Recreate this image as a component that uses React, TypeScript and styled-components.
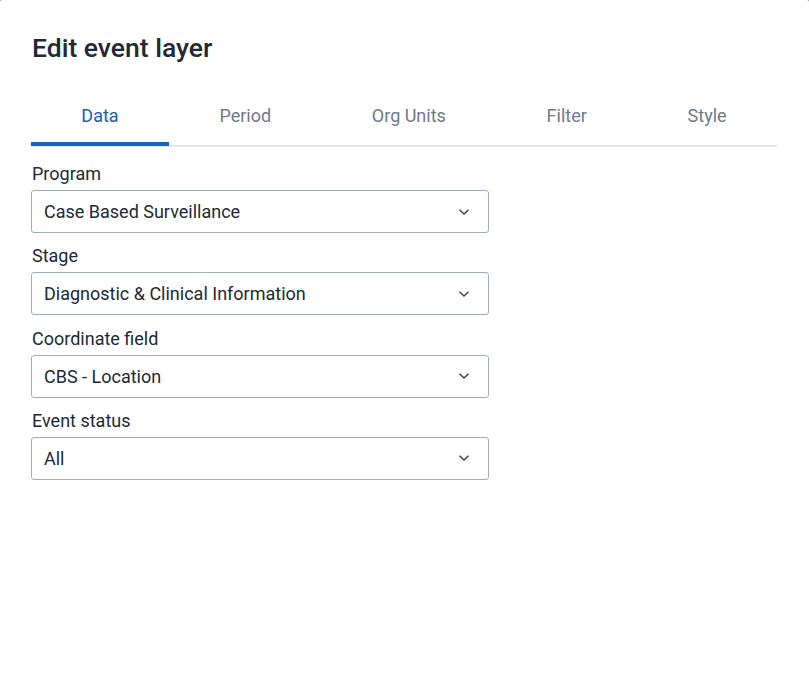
import React from "react";
import styled, { createGlobalStyle } from "styled-components";

const Global = createGlobalStyle`
  html, body { margin: 0; padding: 0; background: #8a8f96; }
  body { font-family: Roboto, "Liberation Sans", sans-serif; }
  * { box-sizing: border-box; }
`;

const Dialog = styled.div`
  width: 809px;
  height: 678px;
  background: #ffffff;
  border-radius: 2px 2px 0 0;
  padding: 28px 32px 0 32px;
  overflow: hidden;
`;

const Title = styled.h2`
  margin: 0;
  font-size: 26.5px;
  font-weight: 500;
  color: #212934;
  line-height: 40px;
`;

const TabBar = styled.div`
  display: flex;
  margin-top: 28px;
  margin-left: -1px;
  border-bottom: 2px solid #e2e6ec;
`;

const Tab = styled.div<{ $active?: boolean }>`
  flex: 1 1 auto;
  text-align: center;
  font-size: 18px;
  line-height: 22px;
  padding: 9px 8px 15px;
  color: ${(p) => (p.$active ? "#1b5cb3" : "#6e7a8a")};
  margin-bottom: -1px;
  border-bottom: 4px solid ${(p) => (p.$active ? "#1565c0" : "transparent")};
`;

const Form = styled.div`
  display: flex;
  flex-direction: column;
  gap: 11.33px;
  margin-top: 15px;
  width: 458px;
  margin-left: -1px;
`;

const Field = styled.div`
  display: flex;
  flex-direction: column;
  gap: 4px;
`;

const Label = styled.div`
  font-size: 18px;
  line-height: 24px;
  color: #212934;
  padding-left: 1px;
`;

const Select = styled.div`
  height: 43px;
  border: 1px solid #a0adba;
  border-radius: 3px;
  display: flex;
  align-items: center;
  justify-content: space-between;
  padding: 0 18px 0 12px;
  font-size: 18px;
  color: #212934;
`;

const Chevron = () => (
  <svg width="12" height="8" viewBox="0 0 12 8" fill="none">
    <path d="M1.5 1.8 L6 6 L10.5 1.8" stroke="#3a4450" strokeWidth="1.5" />
  </svg>
);

const fields = [
  ["Program", "Case Based Surveillance"],
  ["Stage", "Diagnostic & Clinical Information"],
  ["Coordinate field", "CBS - Location"],
  ["Event status", "All"],
];

const tabs = ["Data", "Period", "Org Units", "Filter", "Style"];

export default function App() {
  return (
    <>
      <Global />
      <Dialog>
        <Title>Edit event layer</Title>
        <TabBar>
          {tabs.map((t, i) => (
            <Tab key={t} $active={i === 0}>
              {t}
            </Tab>
          ))}
        </TabBar>
        <Form>
          {fields.map(([l, v]) => (
            <Field key={l}>
              <Label>{l}</Label>
              <Select>
                <span>{v}</span>
                <Chevron />
              </Select>
            </Field>
          ))}
        </Form>
      </Dialog>
    </>
  );
}
